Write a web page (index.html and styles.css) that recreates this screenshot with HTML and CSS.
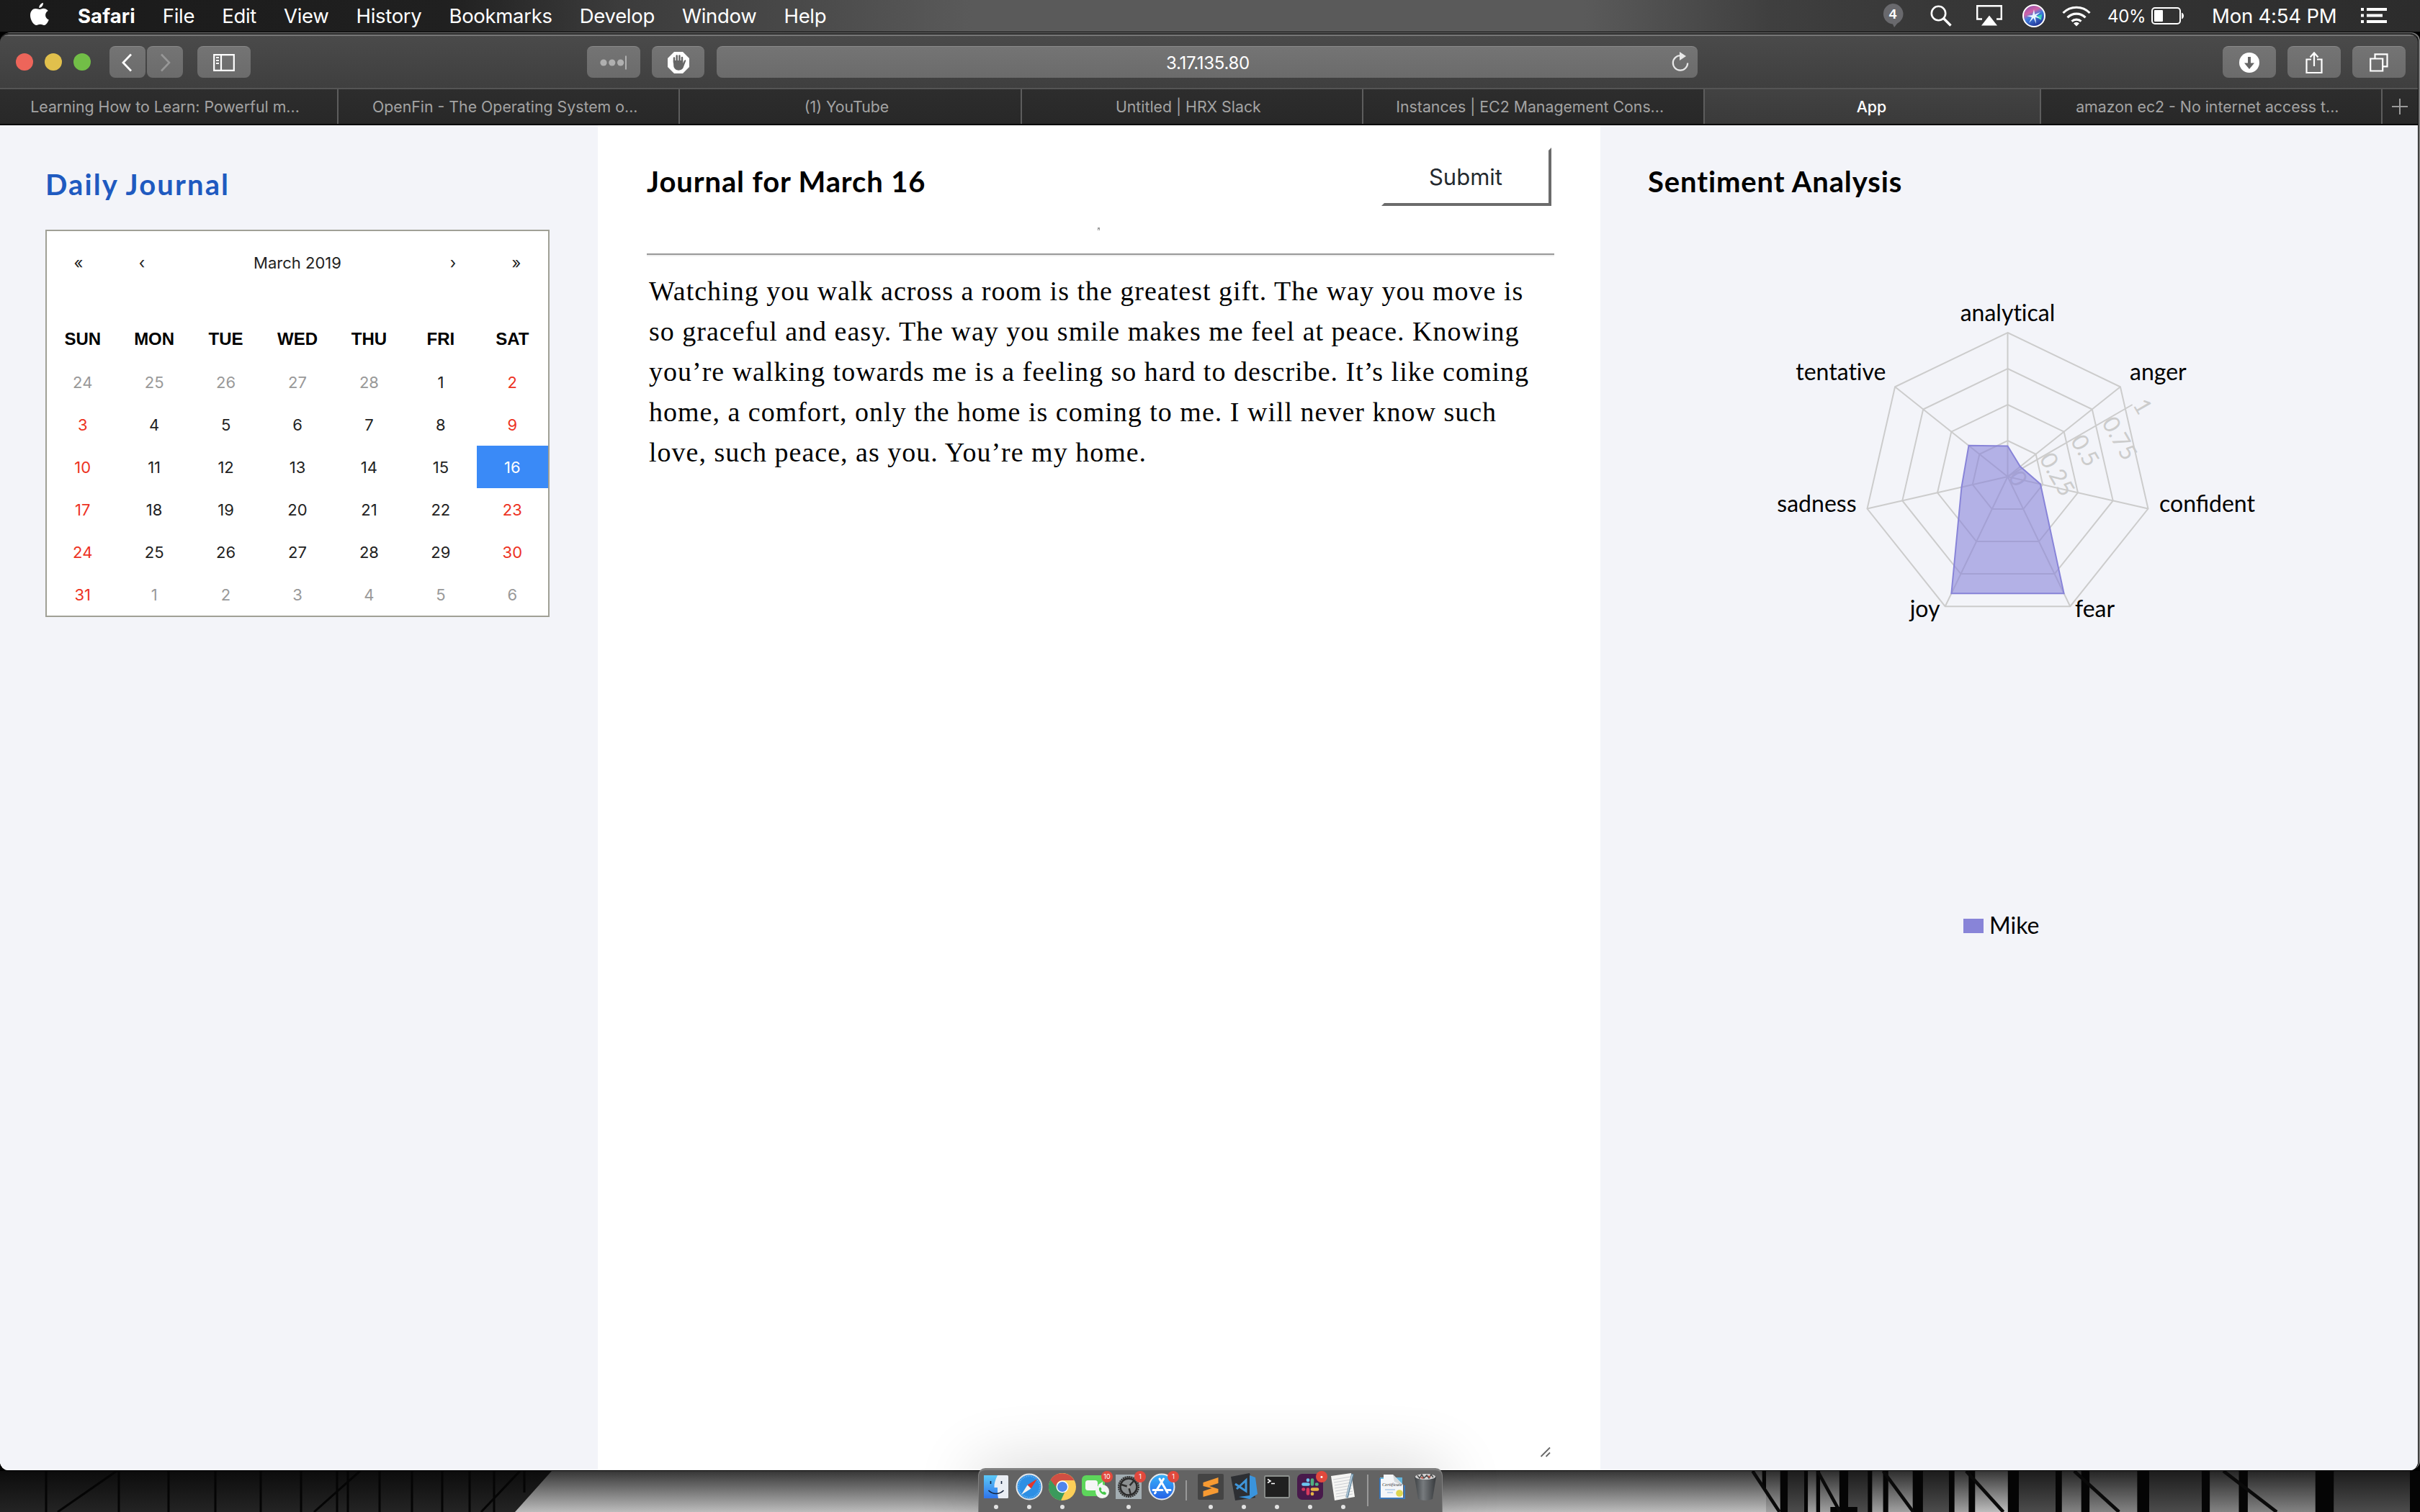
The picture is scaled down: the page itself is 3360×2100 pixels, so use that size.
FILE: index.html
```
<!DOCTYPE html>
<html lang="en">
<head>
<meta charset="utf-8">
<title>App</title>
<link rel="stylesheet" href="styles.css">
</head>
<body>
<header class="menubar">
  <svg class="apple" width="26" height="32" viewBox="0 0 26 32"><path fill="#fff" d="M18 0c.3 3.600-2.600 6.800-5.600 7C12 3.700 15 .5 18 0zM13 9c1.500 0 3-1.300 5.400-1.300 2.700 0 5 1.400 6.300 3.300-5.400 3.200-4.500 10.400 1.100 12.500-1 2.700-3.600 7.500-6.500 7.500-2 0-3-1.200-5.400-1.200S10.400 31 8.600 31C4.800 31 0 23.600 0 17.400 0 11.300 3.600 8 7.400 8 10 8 11.600 9 13 9z"/></svg>
  <nav class="menus">
    <span class="app-name">Safari</span><span>File</span><span>Edit</span><span>View</span><span>History</span><span>Bookmarks</span><span>Develop</span><span>Window</span><span>Help</span>
  </nav>
  <div class="status">
    <svg width="30" height="34" viewBox="0 0 30 34"><path fill="#69696d" d="M15 0a14.500 14.500 0 0 1 6 27.700L17 33l-2-4.500A14.300 14.300 0 0 1 15 0z"/><text class="bubble-count" x="15" y="21">4</text></svg>
    <svg class="s-search" width="30" height="30" viewBox="0 0 30 30" fill="none" stroke="#fff" stroke-width="2.600"><circle cx="11.500" cy="11.500" r="9.700"/><path d="M18.500 18.500L28.500 28.500" stroke-width="3.400"/></svg>
    <svg class="s-airplay" width="36" height="30" viewBox="0 0 36 30"><path d="M8 19.500H1.200V1.300h33.600v18.200H28" fill="none" stroke="#fff" stroke-width="2.400"/><path d="M18 14.500l11 14H7z" fill="#fff"/></svg>
    <svg class="s-siri" width="32" height="32" viewBox="0 0 32 32"><defs><linearGradient id="siri" x1="0" y1="0" x2=".5" y2="1"><stop offset="0" stop-color="#7a4fb5"/><stop offset=".4" stop-color="#d162a6"/><stop offset=".6" stop-color="#3f7ddd"/><stop offset="1" stop-color="#243a9c"/></linearGradient></defs><circle cx="16" cy="16" r="15" fill="url(#siri)" stroke="#fff" stroke-width="2"/><path d="M18 17l9-3-1 8z" fill="#35d3b5"/><path d="M16 7l1.200 7L25 11l-6 5 7 4-8-2 1 9-3.500-8L9 26l4-8-7-2 8-1z" fill="#e8f6ff"/></svg>
    <svg class="s-wifi" width="40" height="30" viewBox="0 0 40 30" fill="none" stroke="#fff" stroke-width="3.200"><path d="M1.500 11a26 26 0 0 1 37 0M7.500 17.300a17.500 17.500 0 0 1 25 0M13.500 22.700a9.500 9.500 0 0 1 13 0"/><path d="M20 29.500l-4-4a5.600 5.600 0 0 1 8 0z" fill="#fff" stroke="none"/></svg>
    <span class="percent">40%</span>
    <svg class="s-battery" width="46" height="24" viewBox="0 0 46 24"><rect x="1" y="1" width="39" height="22" rx="4" fill="none" stroke="#fff" stroke-width="2"/><rect x="4" y="4" width="12" height="16" rx="1" fill="#fff"/><path d="M42 7.500c4 1 4 8 0 9z" fill="#fff"/></svg>
    <span class="clock">Mon 4:54 PM</span>
    <svg class="s-list" width="36" height="22" viewBox="0 0 36 22" fill="#fff"><path d="M0 0h4v4H0zM0 8.500h4v4H0zM0 17h4v4H0zM8 0h28v4H8zM8 8.500h22v4H8zM8 17h28v4H8z"/></svg>
  </div>
</header>

<div class="window">
  <div class="toolbar">
    <div class="lights"><i class="red"></i><i class="yellow"></i><i class="green"></i></div>
    <div class="btn nav-back"><svg width="18" height="28" viewBox="0 0 18 28"><path d="M14 2.500L3 14l11 11.500" fill="none" stroke="#fff" stroke-width="2.800"/></svg></div>
    <div class="btn nav-forward"><svg width="18" height="28" viewBox="0 0 18 28"><path d="M4 2.500L15 14 4 25.500" fill="none" stroke="#979797" stroke-width="2.600"/></svg></div>
    <div class="btn sidebar-btn"><svg width="30" height="24" viewBox="0 0 30 24"><path d="M1.200 1.200h27.600v21.600H1.200zM11 1v22" fill="none" stroke="#fff" stroke-width="2.200"/><path d="M4 5h4M4 9h4M4 13h4" stroke="#fff" stroke-width="1.800"/></svg></div>
    <div class="btn dots-btn"><svg width="40" height="20" viewBox="0 0 40 20" fill="#b0b0b0"><circle cx="6" cy="10" r="4.600"/><circle cx="17.800" cy="10" r="4.600"/><circle cx="29.600" cy="10" r="4.600"/><path d="M36 .5h2v19h-2z"/></svg></div>
    <div class="btn hand-btn"><svg width="30" height="30" viewBox="0 0 30 30"><path d="M9 0h12l9 9v12l-9 9H9l-9-9V9z" fill="#fff"/><path d="M9 15V8.500M12.700 14V5.500M16.400 14V5.500M20 15V8" stroke="#666" stroke-width="2.500" stroke-linecap="round"/><path d="M7.800 12h13.400v4l2-4c1-1.500 2.400-.8 2 .6l-3.400 9C20.500 26.500 10 28 8.300 20z" fill="#666"/></svg></div>
    <div class="url"><span>3.17.135.80</span>
      <svg width="26" height="28" viewBox="0 0 26 28"><path d="M13.500 5.200A10.200 10.200 0 1 0 23.200 15.500" fill="none" stroke="#e8e8e8" stroke-width="2.200"/><path d="M12 0l9 6-9 6z" fill="#e8e8e8"/></svg></div>
    <div class="btn right-btn first"><svg width="28" height="28" viewBox="0 0 28 28"><circle cx="14" cy="14" r="14" fill="#fff"/><path d="M12 6h4v8.500h5L14 23l-7-8.500h5z" fill="#666"/></svg></div>
    <div class="btn right-btn"><svg width="24" height="32" viewBox="0 0 24 32" fill="none" stroke="#fff" stroke-width="2.200"><path d="M8 11.500H1.500V30h21V11.500H16M12 21V3M6.500 8.500L12 2.500l5.500 6"/></svg></div>
    <div class="btn right-btn"><svg width="26" height="26" viewBox="0 0 26 26" fill="none" stroke="#fff" stroke-width="2.200"><path d="M1.200 7.500h17V24.500h-17zM7.500 7V1.300h17v17h-6"/></svg></div>
  </div>
  <div class="tabs">
    <div class="tab">Learning How to Learn: Powerful m...</div>
    <div class="tab">OpenFin - The Operating System o...</div>
    <div class="tab">(1) YouTube</div>
    <div class="tab">Untitled | HRX Slack</div>
    <div class="tab">Instances | EC2 Management Cons...</div>
    <div class="tab active">App</div>
    <div class="tab">amazon ec2 - No internet access t...</div>
    <div class="new-tab"><svg width="22" height="22" viewBox="0 0 22 22"><path d="M11 0v22M0 11h22" stroke="#9a9a9a" stroke-width="2"/></svg></div>
  </div>

  <main class="content">
    <aside class="left">
      <h1>Daily Journal</h1>
      <div class="calendar">
        <div class="cal-nav"><span>«</span><span>‹</span><span class="month">March 2019</span><span>›</span><span>»</span></div>
        <div class="grid weekdays"><b>SUN</b><b>MON</b><b>TUE</b><b>WED</b><b>THU</b><b>FRI</b><b>SAT</b></div>
        <div class="grid days">
          <span class="out">24</span><span class="out">25</span><span class="out">26</span><span class="out">27</span><span class="out">28</span><span>1</span><span class="we">2</span>
          <span class="we">3</span><span>4</span><span>5</span><span>6</span><span>7</span><span>8</span><span class="we">9</span>
          <span class="we">10</span><span>11</span><span>12</span><span>13</span><span>14</span><span>15</span><span class="selected">16</span>
          <span class="we">17</span><span>18</span><span>19</span><span>20</span><span>21</span><span>22</span><span class="we">23</span>
          <span class="we">24</span><span>25</span><span>26</span><span>27</span><span>28</span><span>29</span><span class="we">30</span>
          <span class="we">31</span><span class="out">1</span><span class="out">2</span><span class="out">3</span><span class="out">4</span><span class="out">5</span><span class="out">6</span>
        </div>
      </div>
    </aside>

    <section class="journal">
      <div class="journal-head"><h2>Journal for March 16</h2><button class="submit">Submit</button></div>
      <div class="speck"></div>
      <div class="rule"></div>
      <div class="entry">
        <p>Watching you walk across a room is the greatest gift. The way you move is<br>so graceful and easy. The way you smile makes me feel at peace. Knowing<br>you’re walking towards me is a feeling so hard to describe. It’s like coming<br>home, a comfort, only the home is coming to me. I will never know such<br>love, such peace, as you. You’re my home.</p>
        <svg class="grip" width="16" height="16" viewBox="0 0 16 16"><path d="M1.500 14L14 1.500M8.500 14L14 8.500" stroke="#666" stroke-width="1.800"/></svg>
      </div>
    </section>

    <aside class="right">
      <h2>Sentiment Analysis</h2>
      <svg class="radar" width="1135" height="700" viewBox="2222 300 1135 700">
        <g transform="translate(2787.5 662)">
          <g fill="none" stroke="#ccc" stroke-width="2">
            <path d="M0 0V-200M0 0L156.400-124.700M0 0L195 44.500M0 0L86.800 180.200M0 0L-86.800 180.200M0 0L-195 44.500M0 0L-156.400-124.700"/>
            <polygon points="0,-200 156.400,-124.700 195,44.500 86.800,180.200 -86.800,180.200 -195,44.500 -156.400,-124.700"/>
            <polygon points="0,-150 117.300,-93.500 146.200,33.400 65.100,135.100 -65.100,135.100 -146.200,33.400 -117.300,-93.500"/>
            <polygon points="0,-100 78.200,-62.400 97.500,22.300 43.400,90.100 -43.400,90.100 -97.500,22.300 -78.200,-62.400"/>
            <polygon points="0,-50 39.100,-31.200 48.700,11.100 21.700,45 -21.700,45 -48.700,11.100 -39.100,-31.200"/>
            <path d="M0 0L173.200-100"/>
          </g>
          <g class="ticks">
            <text transform="rotate(60)">0</text>
            <text transform="translate(43.300 -25) rotate(60)">0.25</text>
            <text transform="translate(86.600 -50) rotate(60)">0.5</text>
            <text transform="translate(129.900 -75) rotate(60)">0.75</text>
            <text transform="translate(173.200 -100) rotate(60)">1</text>
          </g>
          <polygon points="0,-42.500 17.500,-14 45.500,10.300 78.100,162.200 -78.100,162.200 -64,14.600 -54,-43.200" fill="#8884d8" fill-opacity=".6" stroke="#8884d8" stroke-width="2"/>
        </g>
        <g class="labels">
          <text class="no-liga" x="2787.500" y="445.500" text-anchor="middle">analytical</text>
          <text x="2957" y="528">anger</text>
          <text x="2998" y="710.500">confident</text>
          <text x="2881" y="856.500">fear</text>
          <text x="2693.500" y="856.500" text-anchor="end">joy</text>
          <text x="2577.500" y="710.500" text-anchor="end">sadness</text>
          <text class="no-liga" x="2618.500" y="528" text-anchor="end">tentative</text>
        </g>
      </svg>
      <div class="legend"><svg width="28" height="20"><rect width="28" height="20" fill="#8884d8"/></svg><span>Mike</span></div>
    </aside>
  </main>
</div>

<svg class="wallpaper" width="3360" height="57" viewBox="0 0 3360 57" preserveAspectRatio="none">
  <defs>
    <linearGradient id="sky" x1="0" y1="0" x2="0" y2="1"><stop offset="0" stop-color="#363636"/><stop offset="1" stop-color="#bcbcbc"/></linearGradient>
    <linearGradient id="wall" x1="0" y1="0" x2="0" y2="1"><stop offset="0" stop-color="#0c0c0c"/><stop offset="1" stop-color="#242424"/></linearGradient>
    <linearGradient id="slat" x1="0" y1="0" x2="0" y2="1"><stop offset="0" stop-color="#1c1c1c"/><stop offset="1" stop-color="#4c4c4c"/></linearGradient>
  </defs>
  <rect width="3360" height="57" fill="url(#sky)"/>
  <path d="M0 0h766l-51 57H0z" fill="url(#wall)"/>
  <path d="M64 0v57M165 0v57M234 0v57M299 0v57M362 0v57M418 0v57M468 0v57M483 0v57M527 0v57M572 0v57M614 0v57M652 0v57M686 0v57M728 0v30M162 0L80 57M500 0L436 57M722 0L668 57" stroke="#050505" stroke-width="3" fill="none"/>
  <g transform="translate(1960) scale(.893 1)">
    <path d="M585 0h25v57h-25zM679 0h30v57h-30zM795 0h40v57h-40zM944 0h57v57h-57zM1147 0h81v57h-81zM1434 0h118v57h-118z" fill="url(#slat)"/>
    <path d="M551 0h22v57h-22zM616 0h49v57h-49zM716 0h63v57h-63zM844 0h22v57h-22z" fill="#000" fill-opacity=".15"/>
    <path d="M1300 0h105v57h-105zM1054 0h74v57h-74zM1011 0h30v57h-30zM1241 0h45v57h-45z" fill="#000" fill-opacity=".3"/>
    <path d="M545 0h6v24h-6zM573 0h12v57h-12zM610 0h6v57h-6zM629 0h6v57h-6zM665 0h14v57h-14zM709 0h7v57h-7zM733 0h8v57h-8zM779 0h16v57h-16zM835 0h9v57h-9zM866 0h10v57h-10zM927 0h17v57h-17zM1001 0h10v57h-10zM1041 0h13v57h-13zM1128 0h19v57h-19zM1228 0h13v57h-13zM1286 0h14v57h-14zM1405 0h29v57h-29zM1552 0h20v57h-20zM651 50h42v7h-42z" fill="#050505"/>
    <path d="M530 0L572 57M631 0L666 57M733 0L780 57M862 0L920 57M1030 0L1100 57M1262 0L1345 57" stroke="#0a0a0a" stroke-width="5" fill="none"/>
  </g>
</svg>

<div class="dock">
  <div class="item on"><svg width="34" height="34" viewBox="0 0 34 34"><defs><linearGradient id="fb" x1="0" y1="0" x2="0" y2="1"><stop offset="0" stop-color="#5cc9f8"/><stop offset="1" stop-color="#2f74ea"/></linearGradient></defs><rect y="1" width="34" height="32" rx="1.500" fill="#e9edf3"/><path d="M0 1h19c-3 6-5 12-4.500 17H19c0 5 0 10 1 15H0z" fill="url(#fb)"/><path d="M9.500 9v4M24.500 9v4M6.500 22c6 6 15 6 21 0" stroke="#15233c" stroke-width="1.600" fill="none"/></svg></div>
  <div class="item on"><svg width="38" height="38" viewBox="0 0 38 38"><circle cx="19" cy="19" r="17.500" fill="#2d8fe4" stroke="#e4e6e8" stroke-width="2"/><circle cx="19" cy="19" r="14.800" fill="none" stroke="#8ac4f2" stroke-width="1.800" stroke-dasharray=".8 1.700"/><path d="M30 8L21.500 21.500 16.500 16.500z" fill="#e5342b"/><path d="M8 30l8.500-13.500 5 5z" fill="#f3f3f3"/></svg></div>
  <div class="item on"><svg width="38" height="38" viewBox="0 0 38 38"><circle cx="19" cy="19" r="19" fill="#fccf58"/><path d="M19 19L2.500 9.500A19 19 0 0 0 17 38l6-13z" fill="#3b9a5c"/><path d="M2.500 9.500A19 19 0 0 1 35.500 10H19a9 9 0 0 0-9 9z" fill="#d04f43"/><circle cx="19" cy="19" r="8.500" fill="#fff"/><circle cx="19" cy="19" r="7" fill="#4f86ec"/></svg></div>
  <div class="item"><svg width="38" height="34" viewBox="0 0 38 34"><rect y="1" width="32" height="29" rx="6" fill="#5dd65b"/><rect x="5" y="8" width="17" height="14" rx="3.500" fill="#f6f6f6"/><path d="M23 14l6-4v10l-6-4z" fill="#f6f6f6"/><circle cx="28.500" cy="23.500" r="9.500" fill="#f2f5f2"/><path d="M24 18.500c-1 5 4 10 9 9.500l1-2.500-3-2-2 1-2.500-2.500 1-2-1.500-2.500z" fill="#43c748"/></svg><em>10</em></div>
  <div class="item on"><svg width="36" height="34" viewBox="0 0 36 34"><rect width="36" height="34" fill="#a3adb2"/><circle cx="18" cy="17" r="14" fill="#808486" stroke="#2c2c2c" stroke-width="2" stroke-dasharray="2 1"/><circle cx="18" cy="17" r="11.500" fill="#8b8f91" stroke="#2a2a2a" stroke-width="2.400"/><path d="M18 17L8 14M18 17l7-8M18 17l3 11" stroke="#2c2c2c" stroke-width="2.400"/><circle cx="18" cy="17" r="2.500" fill="#999"/></svg><em>1</em></div>
  <div class="item"><svg width="38" height="38" viewBox="0 0 38 38"><defs><linearGradient id="as" x1="0" y1="0" x2="0" y2="1"><stop offset="0" stop-color="#38b2fa"/><stop offset="1" stop-color="#2561e6"/></linearGradient></defs><circle cx="19" cy="19" r="17.500" fill="url(#as)" stroke="#e6e9ec" stroke-width="2"/><path d="M16 8l11 19M21.500 8L12 23.500M7 23.500h13M25.500 23.500H31M10.500 26.500l-1 1.500" stroke="#fff" stroke-width="3" stroke-linecap="round"/></svg><em>1</em></div>
  <div class="sep short"></div>
  <div class="item on"><svg width="36" height="36" viewBox="0 0 36 36"><rect width="36" height="36" rx="2" fill="#444"/><path d="M7.500 12L28.500 5v8L16 17l12.500 4v5L7.500 32v-8l12-4-12-3z" fill="#f79a32"/></svg></div>
  <div class="item on"><svg width="38" height="38" viewBox="0 0 38 38"><path d="M1 5L27 0l8 34-28 4z" fill="#2d2f33"/><path d="M27 3l8 3 3 23-11 7-15-3 15-2z" fill="#3a94dc"/><path d="M7 15l15 10V10L9 22" fill="none" stroke="#3f96da" stroke-width="3"/></svg></div>
  <div class="item on"><svg width="36" height="34" viewBox="0 0 36 34"><rect x="1" y="2" width="34" height="30" rx="1.500" fill="#202020" stroke="#8d918e" stroke-width="1.800"/><path d="M5 6.500l4 2.500-4 2.500M10 12.500h5" stroke="#fff" stroke-width="1.500" fill="none"/></svg></div>
  <div class="item on"><svg width="36" height="36" viewBox="0 0 36 36"><rect width="36" height="36" rx="7" fill="#481a4b"/><g stroke-width="4.600" stroke-linecap="round"><path d="M8.500 14.500h7M15 8.500v.5" stroke="#6cc6ef"/><path d="M21 8.500v6M27 14.500h.5" stroke="#4faf80"/><path d="M15 21.500v6M8.500 21.500H9" stroke="#d83a5e"/><path d="M21 21.500h7M21 27.500v.5" stroke="#e5b345"/></g></svg><em>•</em></div>
  <div class="item on"><svg width="34" height="38" viewBox="0 0 34 38"><path d="M0 4L28 0l5 33-28 5z" fill="#f5f5f3"/><path d="M3 9l24-4M4 13l24-4M5 17l23-4M5 21l24-4M6 25l23-4M7 29l23-4M7 33l23-4" stroke="#ccced2" stroke-width="1"/><path d="M30 1L22 34" stroke="#65879f" stroke-width="3.500"/><path d="M29.500 2L21.700 33" stroke="#c8dbe9" stroke-width="1.200"/></svg></div>
  <div class="sep"></div>
  <div class="item last"><svg width="36" height="34" viewBox="0 0 36 34"><path d="M1 4h31v10H1z" fill="#63b5dc"/><path d="M6 0h13l14 14v18H2V6h4z" fill="#f4f6f8"/><path d="M1 5v28h34V15" fill="none" stroke="#3b78ba" stroke-width="2"/><path d="M19 0l2 10 12 5z" fill="#d4d8da"/><text class="cert" x="4" y="16">Certificate</text><path d="M8 21h14M11 25h8" stroke="#8bb4df"/><circle cx="28" cy="26" r="4.800" fill="#ddd64f"/></svg></div>
  <div class="item last"><svg width="30" height="38" viewBox="0 0 30 38"><defs><linearGradient id="tr"><stop offset="0" stop-color="#3e4245"/><stop offset=".4" stop-color="#777b7e"/><stop offset="1" stop-color="#36393c"/></linearGradient></defs><path d="M0 5h30l-5 31q-10 4-20 0z" fill="url(#tr)"/><ellipse cx="15" cy="5" rx="14" ry="4" fill="#d3d3d3"/><path d="M4 3l3 4 3-5 3 5 4-4 3 4 3-5 3 4" stroke="#484848" stroke-width="1.500" fill="none"/><path d="M9 6l3 1M19 4l3 2" stroke="#c35547" stroke-width="2"/></svg></div>
</div>
</body>
</html>
```
FILE: styles.css
```
* { box-sizing: border-box; }
body {
  margin: 0;
  width: 3360px;
  height: 2100px;
  overflow: hidden;
  position: relative;
  background: #000;
  font-family: Inter, "Liberation Sans", sans-serif;
  display: flex;
  flex-direction: column;
}
svg { display: block; flex: none; }
h1, h2, p { margin: 0; }

.menubar {
  height: 44px;
  flex: none;
  display: flex;
  align-items: center;
  padding: 0 46px 0 42px;
  color: #fff;
  font-size: 27.5px;
  background: linear-gradient(90deg, #1a1a1a 0, #202020 620px, #3c3c3c 860px, #474747 1080px, #5a5a5a 1350px, #5a5a5a 2200px, #3f3f3f 2460px, #373737 2700px, #2c2c2c 100%);
}
.apple { margin-top: -4px; }
.menus { display: flex; gap: 38px; margin-left: 40px; letter-spacing: -.3px; }
.app-name { font-weight: 700; letter-spacing: .1px; }
.status { display: flex; align-items: center; margin-left: auto; }
.bubble-count { font: 700 19px "Liberation Sans", sans-serif; fill: #fff; text-anchor: middle; }
.s-search { margin-left: 37px; }
.s-airplay { margin-left: 34px; }
.s-siri { margin-left: 28px; }
.s-wifi { margin-left: 23px; }
.percent { margin-left: 23px; width: 61px; font-size: 24px; letter-spacing: -.3px; }
.s-battery { width: 46px; }
.clock { margin-left: 38px; width: 174px; white-space: nowrap; letter-spacing: -.2px; }
.s-list { margin-left: 33px; }

.window {
  flex: none;
  width: 3358px;
  height: 1996px;
  margin: 2px 0 1px;
  border-top: 2px solid #2a2a2a;
  border-right: 1px solid #111;
  border-radius: 12px;
  overflow: hidden;
  box-shadow: 2px -1px 0 #777;
  display: flex;
  flex-direction: column;
}
.toolbar {
  height: 76px;
  flex: none;
  display: flex;
  align-items: center;
  padding: 0 17px 0 22px;
  border-top: 2px solid #777;
  border-bottom: 2px solid #555;
  background: linear-gradient(#4a4a4a, #3f3f3f);
}
.lights { display: flex; gap: 16px; margin-right: 26px; }
.lights i { width: 24px; height: 24px; border-radius: 50%; }
.red { background: #ed655a; }
.yellow { background: #e1c04c; }
.green { background: #72be47; }
.btn, .url {
  height: 44px;
  border-radius: 8px;
  background: linear-gradient(#747474, #6b6b6b);
  border-top: 1px solid #8b8b8b;
  display: flex;
  align-items: center;
  justify-content: center;
  flex: none;
}
.nav-back, .nav-forward { width: 50px; margin-right: 2px; }
.nav-forward { margin-right: 20px; }
.sidebar-btn, .dots-btn, .right-btn { width: 74px; }
.dots-btn { margin-left: 467px; }
.hand-btn { width: 73px; margin: 0 17px 0 16px; }
.url { width: 1362px; position: relative; color: #fff; font-size: 24px; letter-spacing: -.3px; padding: 2px 0 0 2px; }
.url svg { position: absolute; right: 11px; top: 7px; }
.right-btn { margin-left: 16px; }
.right-btn.first { margin-left: auto; }

.tabs {
  height: 50px;
  flex: none;
  display: flex;
  border-bottom: 2px solid #000;
  background: linear-gradient(#2d2d2d, #282828);
  color: #a3a3a3;
  font-size: 21.3px;
}
.tab {
  flex: 1 1 0;
  min-width: 0;
  white-space: nowrap;
  border-right: 2px solid #5d5d5d;
  display: flex;
  align-items: center;
  justify-content: center;
  padding-right: 10px;
}
.tab:first-child { flex: 0 0 470px; }
.tab.active { background: linear-gradient(#424242, #3a3a3a); color: #fff; font-weight: 500; padding-right: 2px; }
.new-tab { width: 49px; flex: none; display: flex; align-items: center; justify-content: center; }

.content { flex: 1; display: grid; grid-template-columns: 830px 1392px 1fr; background: #fff; }
.left, .right { background: #f3f4f9; }
h1, h2 { font-family: Lato, sans-serif; font-weight: 700; font-size: 40px; line-height: 48px; letter-spacing: .87px; }

.left { padding: 58px 0 0 63px; }
h1 { color: #1f5ac0; height: 87px; letter-spacing: 2.100px; }
.calendar { width: 700px; height: 538px; border: 2px solid #a0a096; background: #fff; }
.cal-nav {
  height: 120px;
  padding-bottom: 32px;
  display: grid;
  grid-template-columns: 88px 88px 1fr 88px 88px;
  align-items: center;
  text-align: center;
  font-size: 22px;
  color: #222;
}
.grid { display: grid; grid-template-columns: repeat(7, 1fr); text-align: center; }
.weekdays { height: 60px; font: 700 24px/60px "Liberation Sans", sans-serif; color: #000; }
.days { font-size: 22px; grid-auto-rows: 59px; line-height: 61px; color: #222; }
.days .out { color: #999; }
.days .we { color: #ed3323; }
.days .selected { background: #3a8af7; color: #fff; height: 59px; }

.journal { padding: 31px 0 0 68px; display: flex; flex-direction: column; }
.journal-head { display: flex; justify-content: space-between; width: 1256px; height: 81px; }
.journal-head h2 { margin-top: 23px; }
.submit {
  width: 236px;
  height: 81px;
  background: #fff;
  border: 4px solid #fff;
  border-right-color: #6b6b6b;
  border-bottom-color: #6b6b6b;
  font: 31px Inter, sans-serif;
  color: #24292e;
  padding: 0 2px 0 0;
}
.speck { width: 3px; height: 4px; margin: 30px 0 32px 626px; border: solid #999; border-width: 2px 1px 0 1px; }
.rule { width: 1260px; height: 4px; border-top: 2px solid #999; border-bottom: 2px solid #eee; }
.entry { flex: 1; width: 1256px; padding: 20px 0 0 3px; display: flex; flex-direction: column; }
.entry p { font: 38px/56px "Liberation Serif", serif; letter-spacing: 1px; white-space: nowrap; color: #000; }
.grip { margin: auto 0 17px auto; }

.right { padding-top: 54px; }
.right h2 { margin-left: 66px; height: 72px; }
.ticks text, .labels text, .legend { font: 32px Lato, sans-serif; }
.ticks text { fill: #ccc; }
.labels .no-liga { font-variant-ligatures: none; }
.legend { display: flex; align-items: center; gap: 8px; margin: 264px 0 0 504px; height: 40px; }
.legend svg { margin-top: 4px; }

.wallpaper { flex: none; }

.dock {
  position: absolute;
  left: 1358px;
  top: 2039px;
  width: 645px;
  height: 61px;
  padding-left: 1px;
  border: solid #808080;
  border-width: 3px 1px 0;
  border-radius: 10px 10px 0 0;
  background: #636363;
  box-shadow: 0 0 90px rgba(0, 0, 0, .2);
  display: flex;
}
.item { width: 46px; height: 58px; display: flex; justify-content: center; align-items: center; padding-bottom: 12px; position: relative; }
.item em {
  position: absolute;
  right: -1px;
  top: 1px;
  width: 16px;
  height: 16px;
  border-radius: 50%;
  background: #e1493d;
  color: #fff;
  font: 9px/16px Inter, sans-serif;
  text-align: center;
}
.item.on::after {
  content: "";
  position: absolute;
  left: 20px;
  bottom: 4px;
  width: 6px;
  height: 6px;
  border-radius: 50%;
  background: #e2e2e2;
}
.sep { width: 2px; height: 44px; margin: 6px 10px 0; background: #999; }
.sep.short { height: 28px; margin-top: 14px; }
.cert { font: italic 6.5px "Liberation Serif", serif; fill: #333; }
```
